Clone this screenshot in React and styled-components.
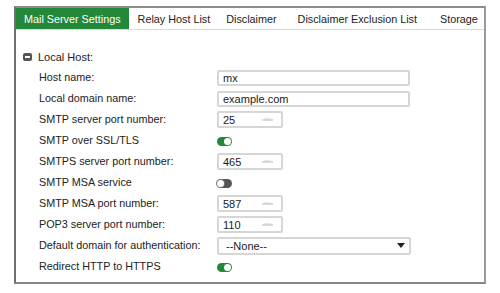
import React from "react";
import styled, { createGlobalStyle } from "styled-components";

const GlobalStyle = createGlobalStyle`
  body {
    margin: 0;
    background: #fff;
    font-family: "Liberation Sans", Arial, sans-serif;
    color: #222;
  }
`;

const Page = styled.div`
  padding: 6px 0 0 14px;
`;

const Panel = styled.div`
  width: 468px;
  height: 274px;
  border-top: 2px solid #8c8c8c;
  border-left: 2px solid #707070;
  border-right: 2px solid #9a9a9a;
  border-bottom: 2px solid #878787;
`;

const TabBar = styled.div`
  display: flex;
  height: 21px;
  border-bottom: 1px solid #cfe3d0;
`;

const Tab = styled.div`
  display: flex;
  align-items: center;
  padding: 0 ${({ $pr }) => $pr ?? 8}px 0 ${({ $pl }) => $pl ?? 8}px;
  font-size: 10.8px;
  white-space: nowrap;
  background: ${({ $active }) => ($active ? "#23883a" : "transparent")};
  color: ${({ $active }) => ($active ? "#fff" : "#222")};
`;

const Body = styled.div`
  padding: 16px 0 0 7px;
`;

const SectionHead = styled.div`
  display: flex;
  align-items: center;
  gap: 6px;
  height: 21px;
  font-size: 11px;
`;

const CollapseIcon = styled.span`
  position: relative;
  width: 9px;
  height: 8px;
  border-radius: 2px;
  background: #555;

  &::after {
    content: "";
    position: absolute;
    left: 2px;
    right: 2px;
    top: 3px;
    height: 2px;
    background: #fff;
  }
`;

const Form = styled.div`
  display: grid;
  grid-template-columns: 178px 1fr;
  grid-auto-rows: 21px;
  align-items: center;
  padding-left: 16px;
`;

const Label = styled.div`
  font-size: 10.8px;
  white-space: nowrap;
  margin-top: -1px;
`;

const Field = styled.div`
  display: flex;
  align-items: center;
  box-sizing: border-box;
  width: ${({ $w }) => $w}px;
  height: ${({ $h }) => $h ?? 16}px;
  border: 2px solid #d6d6d6;
  border-radius: 2px;
  background: #fff;
  padding: 0 4px 0 ${({ $pl }) => $pl ?? 4}px;
  font-size: 11px;
  color: #1a1a1a;
`;

const FieldText = styled.span`
  flex: 1;
`;

const Toggle = styled.span`
  position: relative;
  display: inline-block;
  width: 15px;
  height: 9px;
  margin-top: 2px;
  border-radius: 5px;
  background: ${({ $on }) => ($on ? "#23883a" : "#555")};

  &::after {
    content: "";
    position: absolute;
    top: 1px;
    ${({ $on }) => ($on ? "right: 1px;" : "left: 0;")}
    width: 7px;
    height: 7px;
    border-radius: 50%;
    background: #fff;
    box-shadow: 0 0 0 ${({ $on }) => ($on ? 0 : 1)}px #777;
  }
`;

const Spin = () => (
  <svg width="11" height="4" viewBox="0 0 11 4">
    <path d="M0 2h11" stroke="#b5b5b5" strokeWidth="1" />
    <path d="M2 1h7" stroke="#d0d0d0" strokeWidth="1" />
  </svg>
);

const Caret = () => (
  <svg width="8" height="5" viewBox="0 0 8 5">
    <path d="M0 0h8L4 5z" fill="#222" />
  </svg>
);

const Text = ({ value, w = 193 }) => (
  <Field $w={w}>
    <FieldText>{value}</FieldText>
  </Field>
);

const Port = ({ value }) => (
  <Field $w={66} $h={17}>
    <FieldText>{value}</FieldText>
    <Spin />
    <span style={{ width: 4 }} />
  </Field>
);

const Select = ({ value }) => (
  <Field $w={194} $h={18} $pl={7}>
    <FieldText>{value}</FieldText>
    <Caret />
  </Field>
);

const rows = [
  ["Host name:", <Text value="mx" />],
  ["Local domain name:", <Text value="example.com" />],
  ["SMTP server port number:", <Port value="25" />],
  ["SMTP over SSL/TLS", <Toggle $on />],
  ["SMTPS server port number:", <Port value="465" />],
  ["SMTP MSA service", <Toggle />],
  ["SMTP MSA port number:", <Port value="587" />],
  ["POP3 server port number:", <Port value="110" />],
  ["Default domain for authentication:", <Select value="--None--" />],
  ["Redirect HTTP to HTTPS", <Toggle $on />],
];

export default function App() {
  return (
    <Page>
      <GlobalStyle />
      <Panel>
        <TabBar>
          <Tab $active>Mail Server Settings</Tab>
          <Tab $pl={9}>Relay Host List</Tab>
          <Tab $pr={10}>Disclaimer</Tab>
          <Tab $pl={11} $pr={11}>Disclaimer Exclusion List</Tab>
          <Tab $pl={12}>Storage</Tab>
        </TabBar>
        <Body>
          <SectionHead>
            <CollapseIcon />
            Local Host:
          </SectionHead>
          <Form>
            {rows.map(([label, control]) => (
              <React.Fragment key={label}>
                <Label>{label}</Label>
                <div>{control}</div>
              </React.Fragment>
            ))}
          </Form>
        </Body>
      </Panel>
    </Page>
  );
}
